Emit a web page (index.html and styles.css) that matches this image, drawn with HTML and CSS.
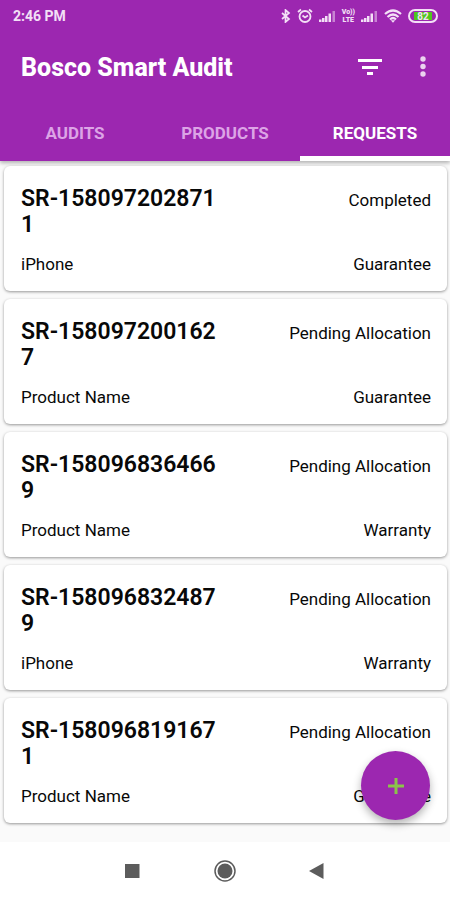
FILE: index.html
```html
<!DOCTYPE html>
<html lang="en">
<head>
<meta charset="utf-8">
<meta name="viewport" content="width=device-width, initial-scale=1">
<title>Bosco Smart Audit</title>
<link rel="stylesheet" href="styles.css">
</head>
<body>
<header class="top">
  <div class="status">
    <span class="time">2:46 PM</span>
    <div class="indicators">
      <svg width="10" height="14" viewBox="0 0 10 14" fill="none" stroke="currentColor" stroke-width="1.700"><path d="M1 4l7 6-3.500 3V1L8 4l-7 6"/></svg>
      <svg width="16" height="16" viewBox="0 0 16 16" fill="none" stroke="currentColor" stroke-width="1.800"><circle cx="8" cy="8.500" r="5.500"/><path d="M1 4l3-2.500M15 4l-3-2.500M5.500 7.500L8 9.500l3-2"/></svg>
      <svg width="17" height="14" viewBox="0 0 17 14" fill="currentColor"><path d="M0 10.500h2.500V13H0zM3 9h2.500v4H3zM6 7h2.500v6H6zM9.500 4.500H12V13H9.500z"/><path opacity=".5" d="M13.500 2H16v11h-2.500z"/></svg>
      <span class="volte"><span>Vo))</span><span>LTE</span></span>
      <svg width="17" height="14" viewBox="0 0 17 14" fill="currentColor"><path d="M0 10.500h2.500V13H0zM3 9h2.500v4H3zM6 7h2.500v6H6zM9.500 4.500H12V13H9.500z"/><path opacity=".5" d="M13.500 2H16v11h-2.500z"/></svg>
      <svg width="18" height="14" viewBox="0 0 18 14" fill="none" stroke="currentColor" stroke-width="2.200"><path d="M1 5q8-7 16 0M3.500 8q5.500-5 11 0M6 10.500q3-3 6 0"/><path fill="currentColor" stroke="none" d="M6.800 11.300h4.400L9 13.800z"/></svg>
      <span class="battery"><span>82</span></span>
    </div>
  </div>
  <div class="appbar">
    <h1>Bosco Smart Audit</h1>
    <button class="icon" type="button" aria-label="Filter"><svg width="24" height="18" viewBox="0 0 24 18" fill="currentColor"><path d="M0 1h24v3H0zM4 8h16v3H4zM9 14h6v3H9z"/></svg></button>
    <button class="icon" type="button" aria-label="More options"><svg width="6" height="22" viewBox="0 0 6 22" fill="currentColor" opacity=".8"><circle cx="3" cy="3" r="2.700"/><circle cx="3" cy="10.500" r="2.700"/><circle cx="3" cy="18" r="2.700"/></svg></button>
  </div>
  <div class="tabs" role="tablist">
    <button type="button" role="tab" aria-selected="false">AUDITS</button>
    <button type="button" role="tab" aria-selected="false">PRODUCTS</button>
    <button type="button" role="tab" aria-selected="true">REQUESTS</button>
  </div>
</header>
<main class="list">
  <article class="card"><div class="row"><h2>SR-1580972028711</h2><span class="state">Completed</span></div><div class="row"><span>iPhone</span><span>Guarantee</span></div></article>
  <article class="card"><div class="row"><h2>SR-1580972001627</h2><span class="state">Pending Allocation</span></div><div class="row"><span>Product Name</span><span>Guarantee</span></div></article>
  <article class="card"><div class="row"><h2>SR-1580968364669</h2><span class="state">Pending Allocation</span></div><div class="row"><span>Product Name</span><span>Warranty</span></div></article>
  <article class="card"><div class="row"><h2>SR-1580968324879</h2><span class="state">Pending Allocation</span></div><div class="row"><span>iPhone</span><span>Warranty</span></div></article>
  <article class="card"><div class="row"><h2>SR-1580968191671</h2><span class="state">Pending Allocation</span></div><div class="row"><span>Product Name</span><span>Guarantee</span></div></article>
  <button class="fab" type="button" aria-label="Add request"><svg width="18" height="18" viewBox="0 0 18 18" fill="currentColor"><path d="M7.500 1h3v6.500H17v3h-6.500V17h-3v-6.500H1v-3h6.500z"/></svg></button>
</main>
<nav class="system">
  <button type="button" aria-label="Recent apps"><svg width="24" height="24" viewBox="0 0 24 24"><path fill="currentColor" d="M4 5h14.500v14H4z"/></svg></button>
  <button type="button" aria-label="Home"><svg width="24" height="24" viewBox="0 0 24 24"><circle cx="12" cy="12" r="10" fill="none" stroke="currentColor" stroke-width="1.500"/><circle cx="12" cy="12" r="7.500" fill="currentColor"/></svg></button>
  <button type="button" aria-label="Back"><svg width="24" height="24" viewBox="0 0 24 24"><path fill="currentColor" d="M4 12l14.500-8v16z"/></svg></button>
</nav>
</body>
</html>
```
FILE: styles.css
```css
* {
  box-sizing: border-box;
}

body {
  margin: 0;
  min-height: 100vh;
  display: flex;
  flex-direction: column;
  background: #fafafa;
  color: #080808;
  font: 17px/20px Roboto, sans-serif;
}

button {
  border: 0;
  padding: 0;
  background: none;
  color: inherit;
  font: inherit;
}

svg {
  display: block;
}

.top {
  position: relative;
  background: #9c27b0;
  color: #fff;
  box-shadow: 0 2px 4px rgba(0, 0, 0, 0.3);
}

.status {
  display: flex;
  justify-content: space-between;
  align-items: center;
  height: 32px;
  padding: 0 12px 0 13px;
  color: #f3e0f6;
}

.time {
  font-size: 14px;
  font-weight: 700;
}

.indicators {
  display: flex;
  align-items: center;
  gap: 6px;
}

.volte {
  display: flex;
  flex-direction: column;
  align-items: center;
  font-size: 7px;
  font-weight: 900;
  line-height: 8px;
}

.battery {
  display: flex;
  width: 30px;
  height: 14px;
  padding: 1px 4px;
  border: 2px solid #f3e0f6;
  border-radius: 7px;
}

.battery span {
  flex: 1;
  background: #4fc61e;
  font-size: 10px;
  font-weight: 700;
  line-height: 9px;
  text-align: center;
}

.appbar {
  display: flex;
  align-items: center;
  gap: 38px;
  height: 72px;
  padding: 0 24px 0 21px;
}

h1 {
  flex: 1;
  margin: 0;
  font-size: 25px;
  font-weight: 800;
  line-height: 32px;
}

.icon {
  padding-bottom: 2px;
}

.tabs {
  display: grid;
  grid-template-columns: repeat(3, 1fr);
}

.tabs button {
  height: 57px;
  padding-top: 5px;
  border-bottom: 5px solid transparent;
  color: #dca4e6;
  font-size: 17px;
  font-weight: 700;
}

.tabs [aria-selected="true"] {
  border-color: #fff;
  color: #fff;
}

.list {
  position: relative;
  flex: 1;
  display: flex;
  flex-direction: column;
  gap: 8px;
  padding: 5px 3px 17px 4px;
}

.card {
  display: flex;
  flex-direction: column;
  gap: 16px;
  padding: 20px 16px 17px 17px;
  border-radius: 6px;
  background: #fff;
  box-shadow: 0 1px 3px rgba(0, 0, 0, 0.4);
}

.row {
  display: flex;
  justify-content: space-between;
}

h2 {
  width: 50%;
  margin: 0;
  font-size: 23px;
  font-weight: 600;
  line-height: 26px;
  word-break: break-all;
}

.state {
  padding-top: 4px;
}

.fab {
  position: absolute;
  right: 20px;
  bottom: 22px;
  display: grid;
  place-items: center;
  width: 69px;
  height: 69px;
  border-radius: 50%;
  background: #9c27b0;
  color: #8bc34a;
  box-shadow: 0 4px 8px rgba(0, 0, 0, 0.3);
}

.system {
  display: flex;
  justify-content: center;
  align-items: center;
  gap: 68px;
  height: 58px;
  background: #fff;
  color: #5c5c5c;
}
```
